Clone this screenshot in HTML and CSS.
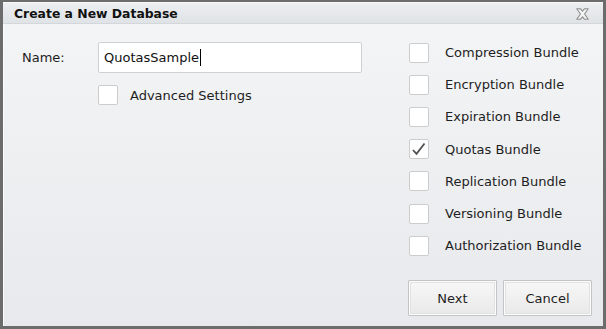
FILE: index.html
```html
<!DOCTYPE html>
<html>
<head>
<meta charset="utf-8">
<link rel="stylesheet" href="styles.css">
</head>
<body>
<div class="dialog">
  <div class="titlebar">
    <span class="title">Create a New Database</span>
    <svg class="close" width="13" height="12" viewBox="0 0 13 12">
      <path d="M0.8 0.8 H4.6 L6.5 3.2 L8.4 0.8 H12.2 L8.6 6 L12.2 11.2 H8.4 L6.5 8.8 L4.6 11.2 H0.8 L4.4 6 Z" fill="#f2f2f2" stroke="#8e8e8e" stroke-width="1.1" stroke-linejoin="round"/>
    </svg>
  </div>
  <div class="content">
    <div class="main">
      <div class="left">
        <div class="name-row">
          <label class="name-label">Name:</label>
          <div class="textbox">QuotasSample<span class="caret"></span></div>
        </div>
        <div class="adv-row">
          <span class="box"></span>
          <span class="adv-label">Advanced Settings</span>
        </div>
      </div>
      <div class="right">
        <div class="opt"><span class="box"></span><span>Compression Bundle</span></div>
        <div class="opt"><span class="box"></span><span>Encryption Bundle</span></div>
        <div class="opt"><span class="box"></span><span>Expiration Bundle</span></div>
        <div class="opt"><span class="box"><svg width="20" height="20" viewBox="0 0 20 20"><path d="M4 11 L7.5 14.8 L15.5 4.5" fill="none" stroke="#505050" stroke-width="1.8" stroke-linejoin="miter"/></svg></span><span>Quotas Bundle</span></div>
        <div class="opt"><span class="box"></span><span>Replication Bundle</span></div>
        <div class="opt"><span class="box"></span><span>Versioning Bundle</span></div>
        <div class="opt"><span class="box"></span><span>Authorization Bundle</span></div>
      </div>
    </div>
    <div class="footer">
      <button class="btn">Next</button>
      <button class="btn">Cancel</button>
    </div>
  </div>
</div>
</body>
</html>
```
FILE: styles.css
```css
html, body {
  margin: 0;
  padding: 0;
  background: #6f6f6f;
}
.dialog {
  box-sizing: border-box;
  width: 606px;
  height: 329px;
  border-style: solid;
  border-color: #6c6c6c;
  border-width: 2px 3px 3px 3px;
  background: linear-gradient(#f4f5f6, #e7e9ec);
  display: flex;
  flex-direction: column;
  font-family: "DejaVu Sans", Verdana, sans-serif;
  font-size: 13px;
  color: #1e1e1e;
  box-shadow: inset 1px 1px 0 #fbfbfb;
}
.titlebar {
  height: 22px;
  box-sizing: border-box;
  border-top: 1px solid #f8f8f8;
  border-bottom: 1px solid #d3d6da;
  background: linear-gradient(#eceef0, #e0e3e6);
  display: flex;
  align-items: center;
  justify-content: space-between;
  padding: 0 14px 0 11px;
}
.title {
  font-weight: bold;
  font-size: 12.4px;
  color: #111;
  padding-top: 1px;
}
.close {
  display: block;
  margin-top: 1px;
}
.content {
  flex: 1;
  display: flex;
  flex-direction: column;
}
.main {
  flex: 1;
  display: flex;
  justify-content: space-between;
}
.left {
  padding: 18px 0 0 19px;
}
.name-row {
  display: flex;
  align-items: center;
}
.name-label {
  width: 76px;
}
.textbox {
  box-sizing: border-box;
  width: 264px;
  height: 31px;
  background: #fff;
  border: 1px solid #cfd1d3;
  border-radius: 2px;
  padding: 0 5px;
  display: flex;
  align-items: center;
  color: #111;
}
.caret {
  display: inline-block;
  width: 1px;
  height: 17px;
  background: #000;
  margin-left: 1px;
}
.adv-row {
  display: flex;
  align-items: center;
  margin: 12px 0 0 76px;
}
.adv-label {
  margin-left: 12px;
}
.box {
  box-sizing: border-box;
  width: 20px;
  height: 20px;
  flex: none;
  background: #fff;
  border: 1px solid #cdcdcd;
  border-radius: 2px;
  position: relative;
}
.box svg {
  position: absolute;
  left: -1px;
  top: -1px;
}
.right {
  padding: 12.5px 19px 0 0;
  width: 175px;
}
.opt {
  height: 32.2px;
  display: flex;
  align-items: center;
}
.opt .box {
  margin-right: 16px;
}
.footer {
  display: flex;
  justify-content: flex-end;
  gap: 6px;
  padding: 0 11px 10px 0;
}
.btn {
  box-sizing: border-box;
  width: 89px;
  height: 36px;
  font-family: "DejaVu Sans", Verdana, sans-serif;
  font-size: 13px;
  color: #1e1e1e;
  border: 1px solid #c3c4c6;
  border-radius: 1px;
  background: linear-gradient(#f7f7f7, #e9e9e9);
  box-shadow: inset 0 0 0 1px #fcfcfc, inset 0 0 0 2px #e2e2e2;
  padding: 0;
}
```
